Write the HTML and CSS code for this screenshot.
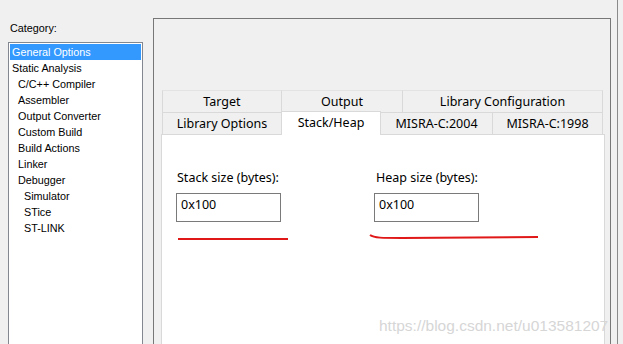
FILE: index.html
```html
<!DOCTYPE html>
<html>
<head>
<meta charset="utf-8">
<link rel="stylesheet" href="styles.css">
</head>
<body>
<div class="window">
  <div class="left">
    <div class="cat-label">Category:</div>
    <div class="list">
      <div class="item sel">General Options</div>
      <div class="item">Static Analysis</div>
      <div class="item l1">C/C++ Compiler</div>
      <div class="item l1">Assembler</div>
      <div class="item l1">Output Converter</div>
      <div class="item l1">Custom Build</div>
      <div class="item l1">Build Actions</div>
      <div class="item l1">Linker</div>
      <div class="item l1">Debugger</div>
      <div class="item l2">Simulator</div>
      <div class="item l2">STice</div>
      <div class="item l2">ST-LINK</div>
    </div>
  </div>
  <div class="group">
    <div class="tabctl">
      <div class="row row1">
        <div class="tab">Target</div>
        <div class="tab">Output</div>
        <div class="tab">Library Configuration</div>
      </div>
      <div class="row row2">
        <div class="tab">Library Options</div>
        <div class="tab active">Stack/Heap</div>
        <div class="tab">MISRA-C:2004</div>
        <div class="tab">MISRA-C:1998</div>
      </div>
      <div class="panel">
        <div class="fields">
          <div class="field stack">
            <div class="flabel">Stack size (bytes):</div>
            <div class="input">0x100</div>
          </div>
          <div class="field heap">
            <div class="flabel">Heap size (bytes):</div>
            <div class="input">0x100</div>
          </div>
        </div>
        <svg class="marks" width="444" height="120" viewBox="0 0 444 120">
          <path d="M16 104 L126 104" stroke="#e01818" stroke-width="2" fill="none"/>
          <path d="M208 100 C212 103 220 103 240 103 L376 102" stroke="#e01818" stroke-width="2" fill="none"/>
        </svg>
        <div class="watermark">https://blog.csdn.net/u013581207</div>
      </div>
    </div>
  </div>
  <div class="edge"></div>
</div>
</body>
</html>
```
FILE: styles.css
```css
html, body {
  margin: 0;
  padding: 0;
  background: #f0f0f0;
  overflow: hidden;
}
.window {
  width: 623px;
  height: 344px;
  display: flex;
  position: relative;
  overflow: hidden;
  font-family: "Liberation Sans", Arial, sans-serif;
  color: #000;
}
.left {
  width: 135px;
  margin-left: 8px;
  padding-top: 21px;
  flex: none;
}
.cat-label {
  font-size: 10.8px;
  line-height: 14px;
  height: 14px;
  padding-left: 2px;
  margin-bottom: 7px;
}
.list {
  height: 400px;
  border: 1px solid #828790;
  background: #fff;
  padding: 1px;
}
.item {
  font-size: 10.8px;
  height: 16px;
  line-height: 16px;
  padding-left: 2px;
}
.item.sel {
  background: #3399ff;
  color: #fff;
}
.item.l1 { padding-left: 8px; }
.item.l2 { padding-left: 14px; }
.group {
  margin-left: 10px;
  margin-top: 18px;
  width: 458px;
  height: 400px;
  border: 1px solid #777;
  flex: none;
  box-sizing: border-box;
  padding: 71px 6px 0 8px;
}
.edge {
  margin-left: 6px;
  width: 1px;
  height: 344px;
  background: #8a8a8a;
  flex: none;
}
.tabctl {
  font-family: "Noto Sans", "Open Sans", sans-serif;
  font-size: 12.5px;
  position: relative;
}
.row {
  display: grid;
  margin-left: 1px;
  width: 440px;
}
.row1 { grid-template-columns: 119px 121px 200px; }
.row2 { grid-template-columns: 119px 99px 112px 110px; }
.tab {
  height: 22px;
  line-height: 21px;
  text-align: center;
  background: #f0f0f0;
  border: 1px solid #d9d9d9;
  border-bottom: none;
  margin-left: -1px;
  box-sizing: border-box;
  white-space: nowrap;
}
.row1 .tab { border-top-color: #e3e3e3; }
.tab.active {
  background: #fff;
  border-color: #d9d9d9;
  margin-top: -1px;
  height: 24px;
  position: relative;
  z-index: 2;
  margin-bottom: -1px;
}
.panel {
  position: relative;
  background: #fff;
  border: 1px solid #d9d9d9;
  width: 444px;
  height: 300px;
  box-sizing: border-box;
  margin-left: -1px;
}
.fields {
  display: flex;
  padding: 35px 0 0 14px;
}
.field.stack { width: 198px; }
.field.heap { width: 110px; }
.flabel {
  height: 16px;
  line-height: 16px;
  padding-left: 1px;
  margin-bottom: 7px;
  white-space: nowrap;
}
.heap .flabel { padding-left: 2px; }
.input {
  width: 105px;
  height: 29px;
  box-sizing: border-box;
  border: 1px solid #7a7a7a;
  background: #fff;
  line-height: 22px;
  padding-left: 4px;
}
.marks {
  position: absolute;
  left: 0;
  top: 0;
}
.watermark {
  position: absolute;
  left: 217px;
  top: 182px;
  font-family: "Liberation Sans", Arial, sans-serif;
  font-size: 15.5px;
  color: #d6d6d6;
  white-space: nowrap;
}
```
